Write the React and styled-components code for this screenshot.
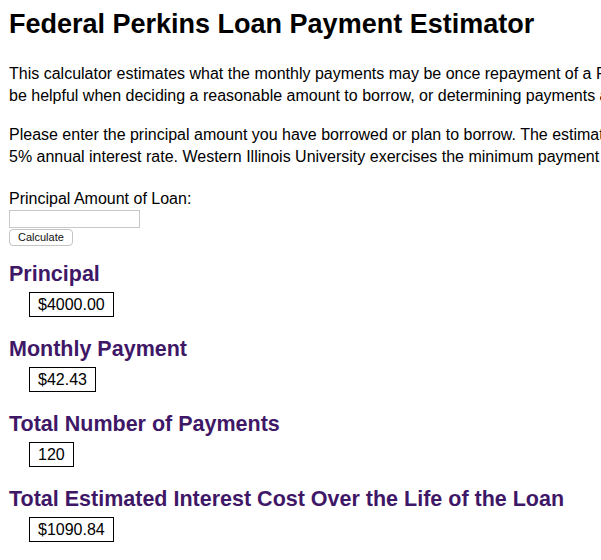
import React, { useState } from 'react';
import styled, { createGlobalStyle } from 'styled-components';

const GlobalStyle = createGlobalStyle`
  html, body {
    margin: 0;
    padding: 0;
    background: #fff;
    overflow: hidden;
  }
  body {
    font-family: "Liberation Sans", Arial, Helvetica, sans-serif;
    color: #000;
  }
`;

const Page = styled.div`
  width: 1100px;
  padding: 8px 9px;
`;

const Title = styled.h1`
  font-size: 27px;
  line-height: 32px;
  font-weight: bold;
  margin: 0 0 23px;
`;

const Intro = styled.p`
  font-size: 16px;
  line-height: 22px;
  margin: 0 0 17px;
`;

const Form = styled.form`
  display: flex;
  flex-direction: column;
  align-items: flex-start;
  margin-top: 20px;
  font-size: 16px;
`;

const Label = styled.label`
  line-height: 22px;
`;

const Input = styled.input`
  box-sizing: border-box;
  width: 131px;
  height: 18px;
  border: 1px solid #c8c8c8;
  padding: 1px 3px;
  font-size: 13px;
  outline: none;
`;

const Button = styled.button`
  box-sizing: border-box;
  margin-top: 1px;
  height: 17px;
  padding: 0 8px;
  font-family: "Liberation Sans", Arial, sans-serif;
  font-size: 11px;
  background: #fff;
  border: 1px solid #c4c4c4;
  border-radius: 4px;
  color: #111;
  line-height: 15px;
`;

const Result = styled.section`
  display: flex;
  flex-direction: column;
  align-items: flex-start;
  margin-top: ${p => p.$first ? '16px' : '20px'};
`;

const Heading = styled.h3`
  font-size: 21.5px;
  line-height: 24px;
  font-weight: bold;
  color: #3f1767;
  margin: 0 0 6px;
`;

const Value = styled.div`
  margin-left: 20px;
  border: 1px solid #000;
  padding: 3px 8px;
  font-size: 16px;
  line-height: 17px;
`;

const results = [
  { label: 'Principal', value: '$4000.00' },
  { label: 'Monthly Payment', value: '$42.43' },
  { label: 'Total Number of Payments', value: '120' },
  { label: 'Total Estimated Interest Cost Over the Life of the Loan', value: '$1090.84' },
];

export default function App() {
  const [amount, setAmount] = useState('');
  return (
    <>
      <GlobalStyle />
      <Page>
        <Title>Federal Perkins Loan Payment Estimator</Title>
        <Intro>
          This calculator estimates what the monthly payments may be once repayment of a Perkins Loan begins. This may<br />
          be helpful when deciding a reasonable amount to borrow, or determining payments after leaving school.
        </Intro>
        <Intro>
          Please enter the principal amount you have borrowed or plan to borrow. The estimator assumes a 10 year term at a<br />
          5% annual interest rate. Western Illinois University exercises the minimum payment of $40 per month.
        </Intro>
        <Form onSubmit={e => e.preventDefault()}>
          <Label htmlFor="principal">Principal Amount of Loan:</Label>
          <Input id="principal" value={amount} onChange={e => setAmount(e.target.value)} />
          <Button type="submit">Calculate</Button>
        </Form>
        {results.map((r, i) => (
          <Result key={r.label} $first={i === 0}>
            <Heading>{r.label}</Heading>
            <Value>{r.value}</Value>
          </Result>
        ))}
      </Page>
    </>
  );
}
